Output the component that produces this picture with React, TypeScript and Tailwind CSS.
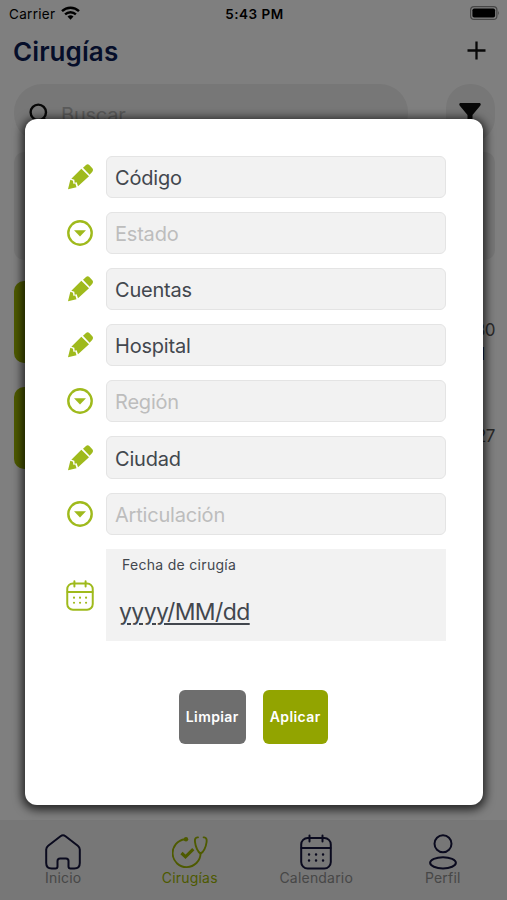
import type { ReactNode } from "react";
import clsx from "clsx";

type FieldKind = "text" | "select";

interface Field {
  label: string;
  kind: FieldKind;
}

const FIELDS: Field[] = [
  { label: "Código", kind: "text" },
  { label: "Estado", kind: "select" },
  { label: "Cuentas", kind: "text" },
  { label: "Hospital", kind: "text" },
  { label: "Región", kind: "select" },
  { label: "Ciudad", kind: "text" },
  { label: "Articulación", kind: "select" },
];

const PencilIcon = () => (
  <svg width="26" height="26" viewBox="51 72 78 78" fill="#9fba1c">
    <path d="M99 83l9-8q5-4 10 0l9 10q4 5 0 10l-8 9z" />
    <path d="M94 86l23 23-33 30-4-12-6 1-1-9-9-3z" />
    <path d="M61 119l8 3 1 9.500 6-1 3.500 11L54 148z" />
  </svg>
);

const SelectIcon = () => (
  <svg width="26" height="26" viewBox="0 0 26 26" fill="none">
    <circle cx="13" cy="13" r="11.700" stroke="#9fba1c" strokeWidth="2.400" />
    <path d="M7 10.200h12L13 16.400z" fill="#9fba1c" />
  </svg>
);

const CalendarIcon = ({ className }: { className?: string }) => (
  <svg viewBox="0 0 32 36" fill="none" stroke="currentColor" strokeWidth="2" strokeLinecap="round" className={className}>
    <rect x="1.2" y="4" width="29.6" height="30.5" rx="6.5" />
    <path d="M1.5 14h29M9.5 1.5v6M22.5 1.5v6" />
    <path d="M9 20.5h.1M16 20.5h.1M23 20.5h.1M9 26.5h.1M16 26.5h.1M23 26.5h.1" strokeWidth="2.4" />
  </svg>
);

const HomeIcon = () => (
  <svg width="36" height="36" viewBox="0 0 36 36" fill="none" stroke="currentColor" strokeWidth="2" strokeLinejoin="round">
    <path d="M1.2 15.5q0-2.200 2-3.800L15.500 2.200q2.500-1.800 5 0l12.300 9.500q2 1.600 2 3.800V29q0 5.500-5.500 5.500h-3.800q-2 0-2-2V27q0-2.500-2.500-2.500h-6q-2.500 0-2.500 2.500v5.500q0 2-2 2H6.700Q1.200 34.500 1.200 29z" />
  </svg>
);

const SurgeryIcon = () => (
  <svg width="36" height="34" viewBox="0 0 36 34" fill="none" stroke="currentColor" strokeWidth="1.900" strokeLinecap="round">
    <path d="M13 4.200A14 14 0 1 0 28.600 18.500" />
    <circle cx="14" cy="4.200" r="2.200" fill="currentColor" stroke="none" />
    <path d="M26 2.400c-2.500-.4-3.400 1.600-3 4.600.5 4.600 3 10.500 5.600 11.500 3-1 5.400-6.900 6-11.500.4-3-.5-5-3-4.600" />
    <path d="M9.500 18l4 3.800 7.800-7.600" strokeWidth="3.200" strokeLinecap="butt" />
  </svg>
);

const ProfileIcon = () => (
  <svg width="28" height="36" viewBox="0 0 28 36" fill="none" stroke="currentColor" strokeWidth="2">
    <circle cx="14" cy="9.800" r="8.500" />
    <ellipse cx="14" cy="28.800" rx="12.900" ry="5.600" />
  </svg>
);

const StatusBar = () => (
  <div className="grid h-7 grid-cols-3 items-center pl-[9px] pr-[7px] text-[13.500px] text-black">
    <div className="flex items-center gap-[6px]">
      <span className="tracking-[0.300px]">Carrier</span>
      <svg width="19" height="14" viewBox="0 0 19 14" fill="none" stroke="black" strokeWidth="2.400" className="-mt-[2px]">
        <path d="M1 5.200a12.200 12.200 0 0 1 17 0M4.100 8.400a7.800 7.800 0 0 1 10.800 0" />
        <path d="M9.500 13.700l-3-3.100a4.400 4.400 0 0 1 6 0z" fill="black" stroke="none" />
      </svg>
    </div>
    <span className="text-center font-semibold tracking-[0.500px]">5:43 PM</span>
    <svg width="30" height="14" viewBox="0 0 30 14" className="-mt-[2px] ml-auto">
      <rect x=".6" y=".6" width="26.300" height="12.800" rx="3.500" fill="none" stroke="#8c8c8c" strokeWidth="1.200" />
      <rect x="2.400" y="2.400" width="22.700" height="9.200" rx="1.800" />
      <path d="M28.200 4.700q1.800 2.300 0 4.600z" fill="#8c8c8c" />
    </svg>
  </div>
);

interface SurgeryCardProps {
  date: string;
  detail?: string;
}

const SurgeryCard = ({ date, detail }: SurgeryCardProps) => (
  <div className="flex h-[82px] justify-between">
    <div className="w-20 rounded-[10px] bg-[#9cb400]" />
    <div className="flex flex-col items-end pt-[37px] text-[17px] leading-6 text-[#555]">
      <span className="tracking-[-0.500px]">{date}</span>
      {detail && <span className="pr-[10px] text-[#222]">{detail}</span>}
    </div>
  </div>
);

interface TabProps {
  label: string;
  active?: boolean;
  children: ReactNode;
}

const Tab = ({ label, active, children }: TabProps) => (
  <div className={clsx("flex flex-1 flex-col items-center", active ? "text-[#9cb400]" : "text-[#14143c]")}>
    <div className="flex h-9 items-center">{children}</div>
    <span className={clsx("text-[14px] leading-[15px] tracking-[0.200px]", !active && "text-[#8e8e8e]")}>{label}</span>
  </div>
);

const FilterModal = () => (
  <div className="absolute left-[25px] top-[119px] flex h-[686px] w-[458px] flex-col rounded-[12px] bg-white px-[37px] pt-[36.500px] shadow-[0_2px_10px_3px_rgba(0,0,0,0.700)]">
    <div className="flex flex-col gap-[14px]">
      {FIELDS.map((field) => (
        <div key={field.label} className="flex h-[42.200px] items-center">
          <div className="flex w-[44px] pl-[5px]">{field.kind === "text" ? <PencilIcon /> : <SelectIcon />}</div>
          <div
            className={clsx(
              "flex h-full w-[340px] items-center rounded-[6px] border border-[#e4e4e4] bg-[#f2f2f2] pl-2 pt-[2px] text-[20px] tracking-[-0.200px]",
              field.kind === "text" ? "text-[#42474e]" : "text-[#bdbdbd]"
            )}
          >
            {field.label}
          </div>
        </div>
      ))}

      {/* Surgery date */}
      <div className="flex h-[92px] items-center">
        <div className="flex w-[44px] pl-[4px] pt-px text-[#9fba1c]">
          <CalendarIcon className="h-[31px] w-[28px] stroke-[2.300]" />
        </div>
        <div className="flex h-full w-[340px] flex-col bg-[#f2f2f2] text-[#42474e]">
          <span className="pl-4 pt-[6px] text-[14px] leading-5 tracking-[0.300px]">Fecha de cirugía</span>
          <span className="pl-[13px] pt-[21px] text-[23px] leading-8 tracking-[-0.600px] underline decoration-[1.500px] underline-offset-[3px]">
            yyyy/MM/dd
          </span>
        </div>
      </div>
    </div>

    <div className="mt-[49px] flex gap-[17.500px] pl-[117px] text-[14px] font-semibold tracking-[0.400px] text-white">
      <button className="h-[54px] w-[66.500px] rounded-[6px] bg-[#6e6e6e]">Limpiar</button>
      <button className="h-[54px] w-[64.500px] rounded-[6px] bg-[#92a400]">Aplicar</button>
    </div>
  </div>
);

export default function App() {
  return (
    <div className="relative flex h-[900px] w-[507px] flex-col overflow-hidden bg-white font-['Inter','Liberation_Sans',sans-serif]">
      <StatusBar />

      {/* Header */}
      <div className="flex h-[46px] items-center justify-between pl-[13px] pr-[21px]">
        <h1 className="text-[26px] font-semibold tracking-[0.100px] text-[#0c1d55]">Cirugías</h1>
        <svg width="19" height="19" viewBox="0 0 19 19" stroke="#111" strokeWidth="2.300" className="-mt-[2px]">
          <path d="M9.500.5v18M.5 9.500h18" />
        </svg>
      </div>

      {/* Search */}
      <div className="mt-[10px] flex justify-between pl-[14px] pr-3">
        <div className="flex h-[58px] w-[394px] items-center gap-[11px] rounded-[28px] bg-[#efefef] pl-[15px] text-[20px] text-[#b5b5b5]">
          <svg width="21" height="23" viewBox="0 0 21 23" fill="none" stroke="#111" strokeWidth="2.400" className="mt-[3px]">
            <circle cx="9.300" cy="9.300" r="7.700" />
            <path d="M14.500 15l5 6" />
          </svg>
          <span className="pt-[3px] tracking-[-0.200px]">Buscar</span>
        </div>
        <div className="flex h-[58px] w-[49px] justify-center rounded-[24px] bg-[#efefef] pt-[19px]">
          <svg width="22" height="22" viewBox="0 0 22 22" fill="#111" className="-ml-px">
            <path d="M1 0h20q1.300 1 .4 2.400L13.500 12v9.500L8.500 18v-6L.6 2.400Q-.3 1 1 0z" />
          </svg>
        </div>
      </div>

      {/* List */}
      <div className="mt-[10px] flex flex-1 flex-col pl-[14px] pr-3">
        <div className="h-[108px] rounded-[10px] bg-[#efefef]" />
        <div className="mt-[21px] flex flex-col gap-6">
          <SurgeryCard date="30" detail="l" />
          <SurgeryCard date="27" />
        </div>
      </div>

      {/* Tab bar */}
      <div className="flex h-[80px] bg-[#efefef] pr-px pt-[14px]">
        <Tab label="Inicio"><HomeIcon /></Tab>
        <Tab label="Cirugías" active><SurgeryIcon /></Tab>
        <Tab label="Calendario"><CalendarIcon className="h-9 w-8" /></Tab>
        <Tab label="Perfil"><ProfileIcon /></Tab>
      </div>

      <div className="absolute inset-0 bg-black/50" />
      <FilterModal />
    </div>
  );
}
